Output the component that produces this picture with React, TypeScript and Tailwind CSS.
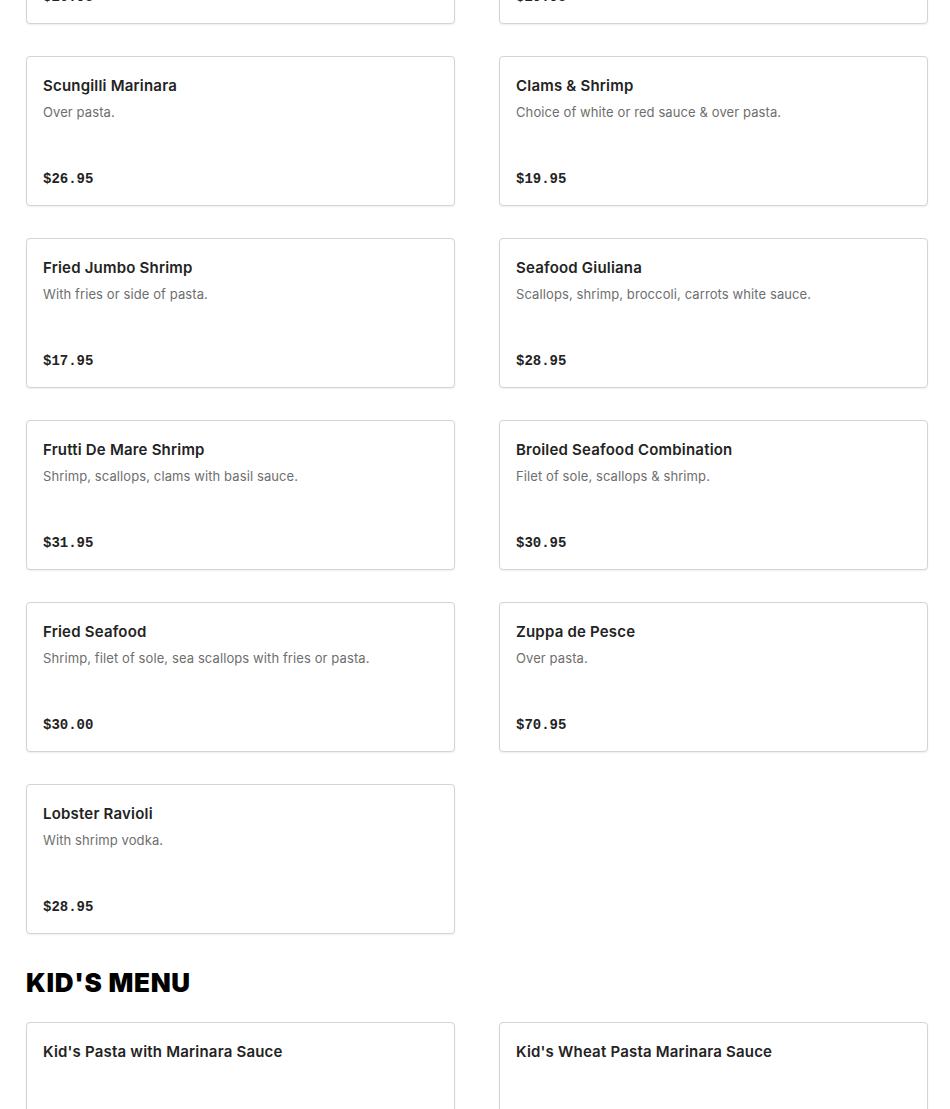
type Item = { name: string; desc?: string; price?: string };

const seafood: Item[] = [
  { name: "Linguine with Clam Sauce", desc: "White or red sauce.", price: "$26.95" },
  { name: "Shrimp Scampi", desc: "Over pasta.", price: "$29.95" },
  { name: "Scungilli Marinara", desc: "Over pasta.", price: "$26.95" },
  { name: "Clams & Shrimp", desc: "Choice of white or red sauce & over pasta.", price: "$19.95" },
  { name: "Fried Jumbo Shrimp", desc: "With fries or side of pasta.", price: "$17.95" },
  { name: "Seafood Giuliana", desc: "Scallops, shrimp, broccoli, carrots white sauce.", price: "$28.95" },
  { name: "Frutti De Mare Shrimp", desc: "Shrimp, scallops, clams with basil sauce.", price: "$31.95" },
  { name: "Broiled Seafood Combination", desc: "Filet of sole, scallops & shrimp.", price: "$30.95" },
  { name: "Fried Seafood", desc: "Shrimp, filet of sole, sea scallops with fries or pasta.", price: "$30.00" },
  { name: "Zuppa de Pesce", desc: "Over pasta.", price: "$70.95" },
  { name: "Lobster Ravioli", desc: "With shrimp vodka.", price: "$28.95" },
];

const kids: Item[] = [
  { name: "Kid's Pasta with Marinara Sauce" },
  { name: "Kid's Wheat Pasta Marinara Sauce" },
];

const MenuCard = ({ item }: { item: Item }) => {
  return (
    <div className="h-[150px] flex flex-col bg-white border border-[#d4d4d4] rounded-[4px] shadow-[0_1px_2px_rgba(0,0,0,0.07)] px-[16px] pt-[17px] pb-[16px]">
      <h3 className="font-['Inter',sans-serif] text-[15px] leading-[24px] font-semibold tracking-[0.2px] text-[#232323]">
        {item.name}
      </h3>
      {item.desc && (
        <p className="mt-[4px] font-['Inter',sans-serif] text-[13px] leading-[20px] tracking-[0.1px] text-[#6e6e6e]">
          {item.desc}
        </p>
      )}
      {item.price && (
        <p className="mt-auto font-['Liberation_Mono',monospace] text-[14px] leading-[20px] font-bold text-[#232323]">
          {item.price}
        </p>
      )}
    </div>
  );
};

export default function App() {
  return (
    <div className="w-full min-h-screen bg-white pl-[26px] pr-[22px] overflow-hidden">
      <div className="mt-[-126px] grid grid-cols-2 gap-x-[44px] gap-y-[32px]">
        {seafood.map((el, index) => (
          <MenuCard key={index} item={el} />
        ))}
      </div>
      <h2 className="mt-[33px] mb-[23px] font-['Inter',sans-serif] font-black text-[26px] leading-[32px] text-black tracking-[0.7px]">
        KID'S MENU
      </h2>
      <div className="grid grid-cols-2 gap-x-[44px] gap-y-[32px] pb-10">
        {kids.map((el, index) => (
          <MenuCard key={index} item={el} />
        ))}
      </div>
    </div>
  );
}
